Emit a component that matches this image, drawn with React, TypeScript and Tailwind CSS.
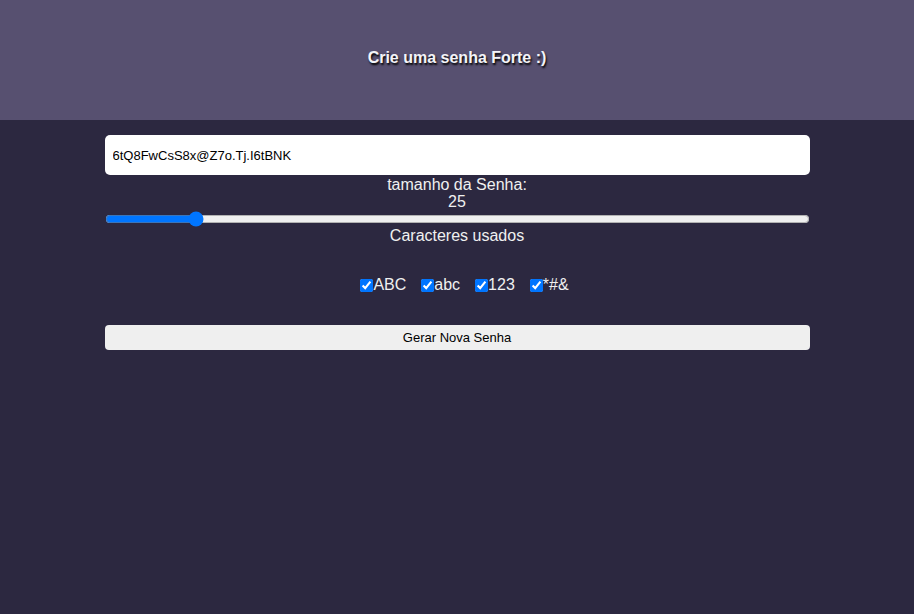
import React, { useState } from "react";

export default function App() {
  const [len, setLen] = useState(25);
  const [opts, setOpts] = useState({ upper: true, lower: true, num: true, sym: true });
  const items: { key: keyof typeof opts; label: string }[] = [
    { key: "upper", label: "ABC" },
    { key: "lower", label: "abc" },
    { key: "num", label: "123" },
    { key: "sym", label: "*#&" },
  ];
  return (
    <div className="min-h-[614px] bg-[#2c2840] font-['Liberation_Sans',Arial,sans-serif]">
      <header className="h-[120px] bg-[#575070] flex items-center justify-center">
        <h1 className="text-[16px] font-bold text-[#f4f4f8] [text-shadow:1px_2px_2px_#000] -mt-[5px]">
          Crie uma senha Forte :)
        </h1>
      </header>
      <main className="w-[705px] mx-auto flex flex-col items-center pt-[15px]">
        <input
          readOnly
          value="6tQ8FwCsS8x@Z7o.Tj.I6tBNK"
          className="w-full h-[40px] bg-white rounded-[5px] px-[8px] text-[13px] text-black outline-none"
        />
        <span className="text-[16px] leading-[18px] pt-[1px] text-[#f0f0f0]">tamanho da Senha:</span>
        <span className="text-[16px] leading-[15px] mb-[2px] text-[#f0f0f0]">{len}</span>
        <input
          type="range"
          min={1}
          max={200}
          value={len}
          onChange={(e) => setLen(Number(e.target.value))}
          className="w-full h-[16px] my-[0px] accent-[#0075ff]"
        />
        <span className="text-[16px] leading-[18px] text-[#f0f0f0]">Caracteres usados</span>
        <div className="flex items-center gap-[15px] mt-[31px] h-[18px] pl-[15px] text-[16px] text-[#f0f0f0]">
          {items.map((it) => (
            <label key={it.key} className="flex items-center">
              <input
                type="checkbox"
                checked={opts[it.key]}
                onChange={() => setOpts({ ...opts, [it.key]: !opts[it.key] })}
                className="w-[13px] h-[13px] m-0 accent-[#0075ff]"
              />
              <span>{it.label}</span>
            </label>
          ))}
        </div>
        <button className="w-full h-[25px] mt-[31px] bg-[#efefef] rounded-[4px] text-[13px] text-black">
          Gerar Nova Senha
        </button>
      </main>
    </div>
  );
}
